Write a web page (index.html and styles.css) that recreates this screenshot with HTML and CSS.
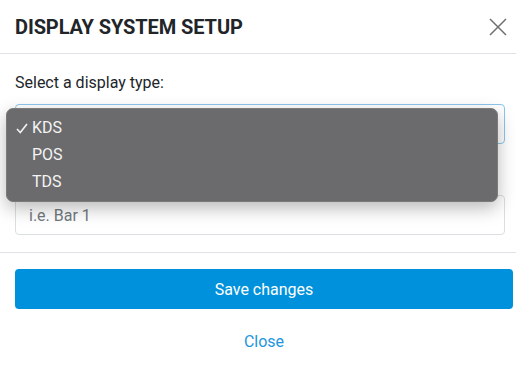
FILE: index.html
```html
<!DOCTYPE html>
<html lang="en">

<head>
	<meta charset="UTF-8">
	<meta name="viewport" content="width=device-width, initial-scale=1.0">
	<title>Display System Setup</title>
	<link rel="stylesheet" href="styles.css">
</head>

<body>
	<div class="modal">
		<header class="modal-header">
			<h1>DISPLAY SYSTEM SETUP</h1>
			<button class="close-x" aria-label="Close">
				<svg width="18" height="18" viewBox="0 0 18 18">
					<path d="M1 1 L17 17 M17 1 L1 17" stroke="#6f6f6f" stroke-width="1.5" fill="none" />
				</svg>
			</button>
		</header>

		<section class="modal-body">
			<label class="field-label" for="displayName">Select a display type:</label>
			<div class="select-box focused"></div>

			<input class="text-input" type="text" id="displayName" placeholder="i.e. Bar 1">

			<ul class="menu">
				<li class="checked">
					<svg class="check" width="12" height="11" viewBox="0 0 12 11">
						<path d="M1 6 L4.3 9.5 L11 1" stroke="#f2f2f2" stroke-width="1.6" fill="none" />
					</svg>
					KDS
				</li>
				<li>POS</li>
				<li>TDS</li>
			</ul>
		</section>

		<footer class="modal-footer">
			<button class="btn-save">Save changes</button>
			<a class="link-close" href="#">Close</a>
		</footer>
	</div>
</body>

</html>
```

FILE: styles.css
```css
body {
	font-family: Roboto, "Liberation Sans", sans-serif;
	margin: 0;
	padding: 0;
	background: #fff;
	color: #212529;
}

.modal-header {
	display: flex;
	align-items: center;
	justify-content: space-between;
	height: 53px;
	padding: 0 9px 0 15px;
	border-bottom: 1px solid #dfe3e6;
}

.modal-header h1 {
	margin: 0;
	font-size: 20px;
	font-weight: 700;
	color: #212529;
	letter-spacing: -0.1px;
}

.close-x {
	background: none;
	border: none;
	padding: 0;
	width: 18px;
	height: 18px;
	cursor: pointer;
}

.modal-body {
	position: relative;
	display: flex;
	flex-direction: column;
	padding: 17px 11px 17px 15px;
	border-bottom: 1px solid #dfe3e6;
}

.field-label {
	font-size: 16px;
	line-height: 24px;
	margin-bottom: 9px;
}

.select-box {
	height: 38px;
	border: 1px solid #8ac6ef;
	border-radius: 4px;
	margin-bottom: 51px;
}

.text-input {
	height: 40px;
	box-sizing: border-box;
	border: 1px solid #dcdfe2;
	border-radius: 4px;
	font-family: inherit;
	font-size: 16px;
	padding: 0 13px;
	outline: none;
}

.text-input::placeholder {
	color: #717880;
}

.menu {
	position: absolute;
	left: 6px;
	top: 54px;
	width: 490px;
	margin: 0;
	padding: 5px 0 6px;
	list-style: none;
	background: #6b6b6d;
	border: 1px solid #7b7b7c;
	border-radius: 7px;
	box-shadow: 0 6px 18px rgba(0, 0, 0, 0.28);
}

.menu li {
	position: relative;
	height: 27px;
	line-height: 27px;
	padding-left: 25px;
	font-size: 16px;
	color: #f4f4f4;
}

.menu .check {
	position: absolute;
	left: 9px;
	top: 9px;
}

.modal-footer {
	display: flex;
	flex-direction: column;
	align-items: stretch;
	padding: 16px 3px 20px 15px;
}

.btn-save {
	height: 40px;
	border: none;
	border-radius: 4px;
	background-color: #0091dc;
	color: #fff;
	font-family: inherit;
	font-size: 16px;
	cursor: pointer;
}

.link-close {
	margin-top: 21px;
	align-self: center;
	line-height: 24px;
	font-size: 16px;
	color: #1c96dc;
	text-decoration: none;
}
```
